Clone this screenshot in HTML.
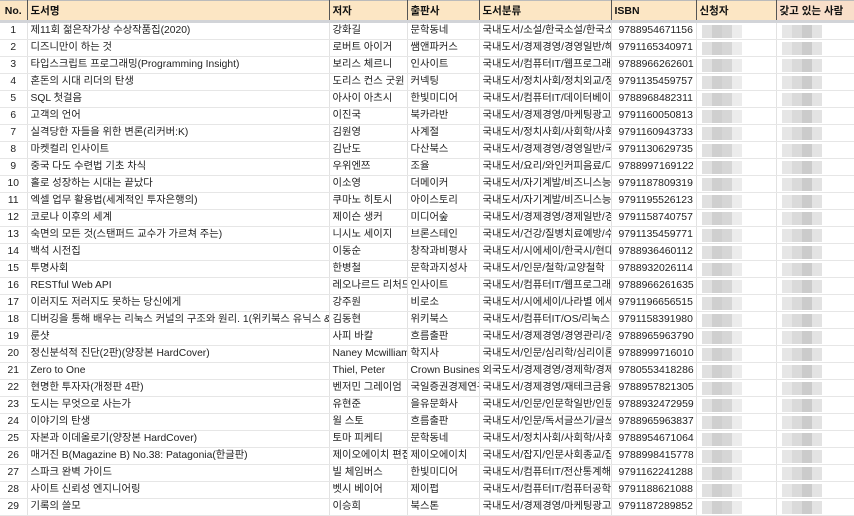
<!DOCTYPE html>
<html><head><meta charset="utf-8"><style>
*{margin:0;padding:0;box-sizing:border-box}
body{width:854px;height:513px;overflow:hidden;background:#fff;font-family:"Liberation Sans","Noto Sans CJK KR",sans-serif;font-size:10.3px;color:#222}
table{border-collapse:collapse;table-layout:fixed;width:854px;position:absolute;left:0;top:0}
td,th{white-space:nowrap;overflow:hidden;height:17px;padding:0 0 0 3px;border-right:1px solid #e2e2e2;border-bottom:1px solid #e6e6e6;text-align:left;line-height:16px}
th{height:21px;background:#fce6c4;font-weight:bold;border-top:1px solid #bbb;border-bottom:3px solid #d2d4d8;border-right:1px solid #555;color:#111;font-size:10.5px}
th.last{background:#f9dfca;border-right:none}
td.n{text-align:center;padding:0}
th.n{text-align:center;padding:0}
td.i{padding-left:7px;font-size:10.4px}
.b{display:block;height:13px;width:40px;margin-left:2px;background:linear-gradient(90deg,#e0e0e0 0 25%,#cfcfcf 25% 50%,#d6d6d6 50% 75%,#ececec 75%)}
.b2{width:40px;background:linear-gradient(90deg,#e6e6e6 0 25%,#dadada 25% 50%,#cbcbcb 50% 75%,#e3e3e3 75%)}
</style></head><body>
<table>
<colgroup><col style="width:27px"><col style="width:302px"><col style="width:78px"><col style="width:72px"><col style="width:132px"><col style="width:85px"><col style="width:80px"><col style="width:78px"></colgroup>
<tr><th class="n">No.</th><th>도서명</th><th>저자</th><th>출판사</th><th>도서분류</th><th>ISBN</th><th>신청자</th><th class="last">갖고 있는 사람</th></tr>
<tr><td class="n">1</td><td>제11회 젊은작가상 수상작품집(2020)</td><td>강화길</td><td>문학동네</td><td>국내도서/소설/한국소설/한국소설</td><td class="i">9788954671156</td><td><span class="b"></span></td><td><span class="b b2"></span></td></tr>
<tr><td class="n">2</td><td>디즈니만이 하는 것</td><td>로버트 아이거</td><td>쌤앤파커스</td><td>국내도서/경제경영/경영일반/해외</td><td class="i">9791165340971</td><td><span class="b"></span></td><td><span class="b b2"></span></td></tr>
<tr><td class="n">3</td><td>타입스크립트 프로그래밍(Programming Insight)</td><td>보리스 체르니</td><td>인사이트</td><td>국내도서/컴퓨터IT/웹프로그래밍</td><td class="i">9788966262601</td><td><span class="b"></span></td><td><span class="b b2"></span></td></tr>
<tr><td class="n">4</td><td>혼돈의 시대 리더의 탄생</td><td>도리스 컨스 굿윈</td><td>커넥팅</td><td>국내도서/정치사회/정치외교/정치</td><td class="i">9791135459757</td><td><span class="b"></span></td><td><span class="b b2"></span></td></tr>
<tr><td class="n">5</td><td>SQL 첫걸음</td><td>아사이 아츠시</td><td>한빛미디어</td><td>국내도서/컴퓨터IT/데이터베이스</td><td class="i">9788968482311</td><td><span class="b"></span></td><td><span class="b b2"></span></td></tr>
<tr><td class="n">6</td><td>고객의 언어</td><td>이진국</td><td>북카라반</td><td>국내도서/경제경영/마케팅광고</td><td class="i">9791160050813</td><td><span class="b"></span></td><td><span class="b b2"></span></td></tr>
<tr><td class="n">7</td><td>실격당한 자들을 위한 변론(리커버:K)</td><td>김원영</td><td>사계절</td><td>국내도서/정치사회/사회학/사회</td><td class="i">9791160943733</td><td><span class="b"></span></td><td><span class="b b2"></span></td></tr>
<tr><td class="n">8</td><td>마켓컬리 인사이트</td><td>김난도</td><td>다산북스</td><td>국내도서/경제경영/경영일반/국내</td><td class="i">9791130629735</td><td><span class="b"></span></td><td><span class="b b2"></span></td></tr>
<tr><td class="n">9</td><td>중국 다도 수련법 기초 차식</td><td>우위엔쯔</td><td>조율</td><td>국내도서/요리/와인커피음료/다도</td><td class="i">9788997169122</td><td><span class="b"></span></td><td><span class="b b2"></span></td></tr>
<tr><td class="n">10</td><td>홀로 성장하는 시대는 끝났다</td><td>이소영</td><td>더메이커</td><td>국내도서/자기계발/비즈니스능력</td><td class="i">9791187809319</td><td><span class="b"></span></td><td><span class="b b2"></span></td></tr>
<tr><td class="n">11</td><td>엑셀 업무 활용법(세계적인 투자은행의)</td><td>쿠마노 히토시</td><td>아이스토리</td><td>국내도서/자기계발/비즈니스능력</td><td class="i">9791195526123</td><td><span class="b"></span></td><td><span class="b b2"></span></td></tr>
<tr><td class="n">12</td><td>코로나 이후의 세계</td><td>제이슨 생커</td><td>미디어숲</td><td>국내도서/경제경영/경제일반/경제</td><td class="i">9791158740757</td><td><span class="b"></span></td><td><span class="b b2"></span></td></tr>
<tr><td class="n">13</td><td>숙면의 모든 것(스탠퍼드 교수가 가르쳐 주는)</td><td>니시노 세이지</td><td>브론스테인</td><td>국내도서/건강/질병치료예방/수면</td><td class="i">9791135459771</td><td><span class="b"></span></td><td><span class="b b2"></span></td></tr>
<tr><td class="n">14</td><td>백석 시전집</td><td>이동순</td><td>창작과비평사</td><td>국내도서/시에세이/한국시/현대시</td><td class="i">9788936460112</td><td><span class="b"></span></td><td><span class="b b2"></span></td></tr>
<tr><td class="n">15</td><td>투명사회</td><td>한병철</td><td>문학과지성사</td><td>국내도서/인문/철학/교양철학</td><td class="i">9788932026114</td><td><span class="b"></span></td><td><span class="b b2"></span></td></tr>
<tr><td class="n">16</td><td>RESTful Web API</td><td>레오나르드 리처드슨</td><td>인사이트</td><td>국내도서/컴퓨터IT/웹프로그래밍</td><td class="i">9788966261635</td><td><span class="b"></span></td><td><span class="b b2"></span></td></tr>
<tr><td class="n">17</td><td>이러지도 저러지도 못하는 당신에게</td><td>강주원</td><td>비로소</td><td>국내도서/시에세이/나라별 에세이</td><td class="i">9791196656515</td><td><span class="b"></span></td><td><span class="b b2"></span></td></tr>
<tr><td class="n">18</td><td>디버깅을 통해 배우는 리눅스 커널의 구조와 원리. 1(위키북스 유닉스 &amp; 리눅스</td><td>김동현</td><td>위키북스</td><td>국내도서/컴퓨터IT/OS/리눅스</td><td class="i">9791158391980</td><td><span class="b"></span></td><td><span class="b b2"></span></td></tr>
<tr><td class="n">19</td><td>룬샷</td><td>사피 바칼</td><td>흐름출판</td><td>국내도서/경제경영/경영관리/경영</td><td class="i">9788965963790</td><td><span class="b"></span></td><td><span class="b b2"></span></td></tr>
<tr><td class="n">20</td><td>정신분석적 진단(2판)(양장본 HardCover)</td><td>Naney Mcwilliams</td><td>학지사</td><td>국내도서/인문/심리학/심리이론/</td><td class="i">9788999716010</td><td><span class="b"></span></td><td><span class="b b2"></span></td></tr>
<tr><td class="n">21</td><td>Zero to One</td><td>Thiel, Peter</td><td>Crown Business</td><td>외국도서/경제경영/경제학/경제</td><td class="i">9780553418286</td><td><span class="b"></span></td><td><span class="b b2"></span></td></tr>
<tr><td class="n">22</td><td>현명한 투자자(개정판 4판)</td><td>벤저민 그레이엄</td><td>국일증권경제연구소</td><td>국내도서/경제경영/재테크금융/주식</td><td class="i">9788957821305</td><td><span class="b"></span></td><td><span class="b b2"></span></td></tr>
<tr><td class="n">23</td><td>도시는 무엇으로 사는가</td><td>유현준</td><td>을유문화사</td><td>국내도서/인문/인문학일반/인문</td><td class="i">9788932472959</td><td><span class="b"></span></td><td><span class="b b2"></span></td></tr>
<tr><td class="n">24</td><td>이야기의 탄생</td><td>윌 스토</td><td>흐름출판</td><td>국내도서/인문/독서글쓰기/글쓰기</td><td class="i">9788965963837</td><td><span class="b"></span></td><td><span class="b b2"></span></td></tr>
<tr><td class="n">25</td><td>자본과 이데올로기(양장본 HardCover)</td><td>토마 피케티</td><td>문학동네</td><td>국내도서/정치사회/사회학/사회</td><td class="i">9788954671064</td><td><span class="b"></span></td><td><span class="b b2"></span></td></tr>
<tr><td class="n">26</td><td>매거진 B(Magazine B) No.38: Patagonia(한글판)</td><td>제이오에이치 편집</td><td>제이오에이치</td><td>국내도서/잡지/인문사회종교/잡지</td><td class="i">9788998415778</td><td><span class="b"></span></td><td><span class="b b2"></span></td></tr>
<tr><td class="n">27</td><td>스파크 완벽 가이드</td><td>빌 체임버스</td><td>한빛미디어</td><td>국내도서/컴퓨터IT/전산통계해석</td><td class="i">9791162241288</td><td><span class="b"></span></td><td><span class="b b2"></span></td></tr>
<tr><td class="n">28</td><td>사이트 신뢰성 엔지니어링</td><td>벳시 베이어</td><td>제이펍</td><td>국내도서/컴퓨터IT/컴퓨터공학/</td><td class="i">9791188621088</td><td><span class="b"></span></td><td><span class="b b2"></span></td></tr>
<tr><td class="n">29</td><td>기록의 쓸모</td><td>이승희</td><td>북스톤</td><td>국내도서/경제경영/마케팅광고</td><td class="i">9791187289852</td><td><span class="b"></span></td><td><span class="b b2"></span></td></tr>
</table>
</body></html>
